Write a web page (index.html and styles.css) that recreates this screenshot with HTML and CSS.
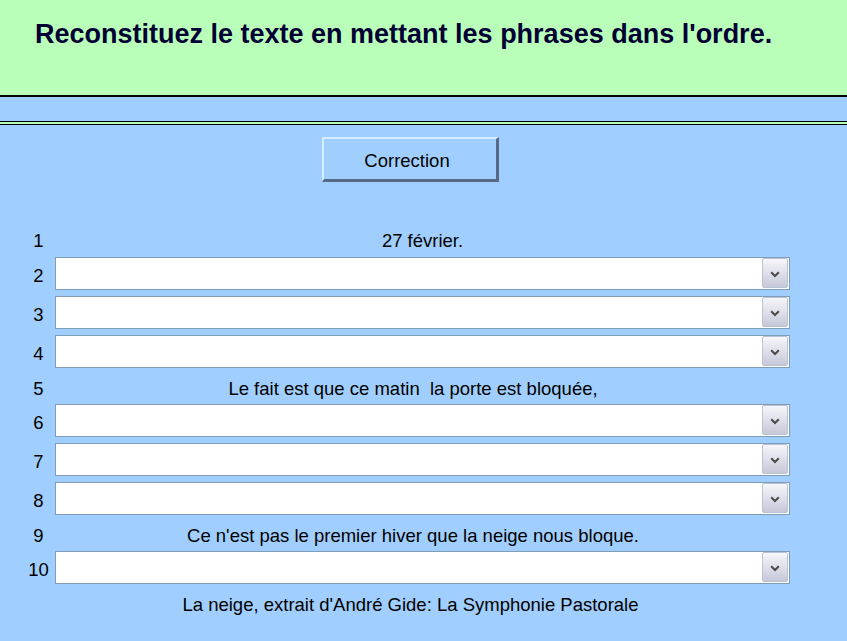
FILE: index.html
```html
<!DOCTYPE html>
<html lang="fr">
<head>
<meta charset="utf-8">
<title>Reconstituez le texte</title>
<link rel="stylesheet" href="styles.css">
</head>
<body>
<header class="header">
  <h1 class="title">Reconstituez le texte en mettant les phrases dans l'ordre.</h1>
</header>
<div class="band"></div>
<div class="rule"></div>
<main class="main">
  <div class="actions">
    <button class="correction" type="button">Correction</button>
  </div>
  <div class="grid">
    <div class="num first">1</div><div class="text first">27 février.</div>
    <div class="num sel">2</div><div class="select"><span class="field"></span><span class="arrow"><svg width="10" height="7" viewBox="0 0 10 7"><path d="M1.2 1.2 L5 5 L8.8 1.2" fill="none" stroke="#4a4a4a" stroke-width="2"/></svg></span></div>
    <div class="num sel">3</div><div class="select"><span class="field"></span><span class="arrow"><svg width="10" height="7" viewBox="0 0 10 7"><path d="M1.2 1.2 L5 5 L8.8 1.2" fill="none" stroke="#4a4a4a" stroke-width="2"/></svg></span></div>
    <div class="num sel">4</div><div class="select"><span class="field"></span><span class="arrow"><svg width="10" height="7" viewBox="0 0 10 7"><path d="M1.2 1.2 L5 5 L8.8 1.2" fill="none" stroke="#4a4a4a" stroke-width="2"/></svg></span></div>
    <div class="num">5</div><div class="text shift">Le fait est que ce matin&nbsp; la porte est bloquée,</div>
    <div class="num sel">6</div><div class="select"><span class="field"></span><span class="arrow"><svg width="10" height="7" viewBox="0 0 10 7"><path d="M1.2 1.2 L5 5 L8.8 1.2" fill="none" stroke="#4a4a4a" stroke-width="2"/></svg></span></div>
    <div class="num sel">7</div><div class="select"><span class="field"></span><span class="arrow"><svg width="10" height="7" viewBox="0 0 10 7"><path d="M1.2 1.2 L5 5 L8.8 1.2" fill="none" stroke="#4a4a4a" stroke-width="2"/></svg></span></div>
    <div class="num sel">8</div><div class="select"><span class="field"></span><span class="arrow"><svg width="10" height="7" viewBox="0 0 10 7"><path d="M1.2 1.2 L5 5 L8.8 1.2" fill="none" stroke="#4a4a4a" stroke-width="2"/></svg></span></div>
    <div class="num">9</div><div class="text shift">Ce n'est pas le premier hiver que la neige nous bloque.</div>
    <div class="num sel">10</div><div class="select"><span class="field"></span><span class="arrow"><svg width="10" height="7" viewBox="0 0 10 7"><path d="M1.2 1.2 L5 5 L8.8 1.2" fill="none" stroke="#4a4a4a" stroke-width="2"/></svg></span></div>
    <div class="num"></div><div class="text source">La neige, extrait d'André Gide: La Symphonie Pastorale</div>
  </div>
</main>
</body>
</html>
```
FILE: styles.css
```css
html, body {
  margin: 0;
  padding: 0;
}
body {
  background: #a0cfff;
  font-family: "Liberation Sans", Arial, sans-serif;
  font-size: 18.5px;
  color: #000;
  width: 847px;
  height: 641px;
  overflow: hidden;
}
.header {
  background: #b9ffb9;
  height: 95px;
  border-bottom: 2px solid #000;
  box-sizing: content-box;
}
.title {
  margin: 0;
  padding: 19px 0 0 35px;
  font-size: 27px;
  line-height: 30px;
  font-weight: bold;
  color: #000033;
}
.band {
  height: 24px;
}
.rule {
  height: 2px;
  background: #b9ffb9;
  border-top: 1px solid #000;
  border-bottom: 1px solid #000;
}
.actions {
  display: flex;
  padding-left: 322px;
  margin-top: 12px;
}
.correction {
  width: 177px;
  height: 45px;
  background: #a0cfff;
  border-style: solid;
  border-width: 2px 3px 3px 2px;
  border-color: #d6ecff #566a88 #566a88 #d6ecff;
  font-family: "Liberation Sans", Arial, sans-serif;
  font-size: 18.5px;
  color: #000;
  padding: 3px 6px 0 0;
}
.grid {
  display: grid;
  grid-template-columns: 25px 735px;
  column-gap: 4px;
  row-gap: 6px;
  padding-left: 26px;
  margin-top: 47px;
}
.num {
  text-align: center;
  height: 24px;
  line-height: 29px;
}
.num.first, .text.first {
  height: 22px;
  line-height: 23px;
}
.num.sel {
  height: 33px;
  line-height: 37px;
}
.text {
  text-align: center;
  height: 24px;
  line-height: 29px;
}
.text.shift {
  padding-right: 19px;
}
.text.source {
  padding-right: 24px;
  margin-top: 3px;
  line-height: 24px;
}
.select {
  display: flex;
  height: 33px;
  box-sizing: border-box;
  border: 1px solid #7f9db9;
  background: #fff;
  padding: 0 1px 1px 0;
}
.field {
  flex: 1;
}
.arrow {
  width: 26px;
  height: 30px;
  box-sizing: border-box;
  display: flex;
  align-items: center;
  justify-content: center;
  padding-top: 3px;
  border: 1px solid #b9c3d6;
  border-radius: 2px;
  background: linear-gradient(#f6f6fa, #dcdde8 55%, #c6c8d8);
}
```
